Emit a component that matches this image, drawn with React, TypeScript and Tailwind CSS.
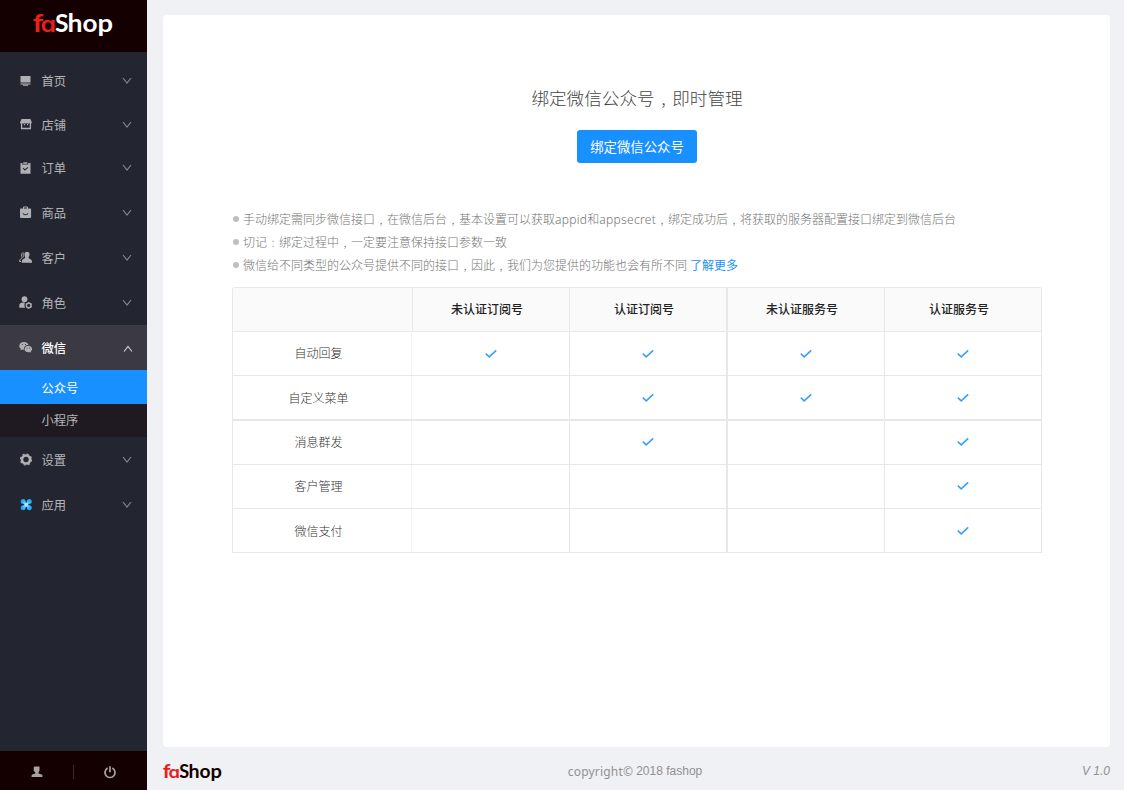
import React from "react";

const cjk = "font-['Noto_Sans_CJK_SC','Noto_Sans',sans-serif]";

const wordmark = [
  { char: "S", x: 22, width: 13.5 },
  { char: "h", x: 34.5, width: 15 },
  { char: "o", x: 49.5, width: 15 },
  { char: "p", x: 64.5, width: 15.5 },
];

function Logo({ width, height, dark }: { width: number; height: number; dark?: boolean }) {
  return (
    <svg width={width} height={height} viewBox="0 0 80 28" className="block overflow-visible">
      <g fill="#e8201d">
        <text x="-.3" y="20" textLength="10.500" lengthAdjust="spacingAndGlyphs" className="font-['Lato',sans-serif] text-[25px] font-bold">f</text>
        <text x="7.500" y="20" textLength="15.500" lengthAdjust="spacingAndGlyphs" className="font-['Inter',sans-serif] text-[22px] font-semibold [font-feature-settings:'cv11']">a</text>
      </g>
      <g fill={dark ? "#140000" : "#ffffff"} className="font-['Lato',sans-serif] text-[25px] font-bold">
        {wordmark.map(({ char, x, width: w }) => (
          <text key={char} x={x} y="20" textLength={w} lengthAdjust="spacingAndGlyphs">
            {char}
          </text>
        ))}
      </g>
    </svg>
  );
}

function Chevron({ up }: { up?: boolean }) {
  return (
    <svg width="10" height="8" viewBox="0 0 10 8" fill="none" stroke={up ? "#cfcfd2" : "#85868d"} strokeWidth="1.2" className={up ? "-mr-px mt-[2px] block" : "block"}>
      <path d={up ? "M1 6.5 5 1.5 9 6.5" : "M1 1 5 6 9 1"} />
    </svg>
  );
}

const icons: Record<string, React.ReactNode> = {
  home: (
    <>
      <path d="M1.500 1h10v6.500h-10z" />
      <path d="M1.500 8.200h10v1.600h-2.500v1.200H4v-1.200H1.500z" opacity=".75" />
    </>
  ),
  shop: (
    <>
      <path d="M2.500 1h9l1.300 3.500c0 1-1.700 1.500-2 .3-.6 1.200-2.200 1.200-2.700 0-.6 1.200-2 1.200-2.500 0-.6 1.200-2.100 1.200-2.600 0-.5 1-2 .8-2-.3z" />
      <path d="M2.600 5v5.500h8.800V5" fill="none" stroke="currentColor" strokeWidth="1.300" />
      <path d="M5 6.500h1M8 6.500h1" stroke="currentColor" strokeWidth="1.500" />
    </>
  ),
  order: (
    <>
      <path fillRule="evenodd" d="M1.500 1h1.800v1.500h6V1h2.200v10.800h-10zM3.700 6.300 5.800 8.800 9.300 5.800 8.600 5 5.900 7.300 4.500 5.700z" />
      <path d="M4.200.3h4.200v1.500H4.200z" />
    </>
  ),
  goods: (
    <>
      <path fillRule="evenodd" d="M1.700 2.400h9.600c.5 0 .8.3.8.8v7.500c0 .8-.5 1.300-1.200 1.300H2.200c-.7 0-1.200-.5-1.200-1.300V3.200c0-.5.300-.8.700-.8zM3.600 7.300c.6 2.600 5.200 2.600 5.800 0h-1c-.6 1.300-3.200 1.300-3.800 0z" />
      <path d="M4.500 3V1h4v2" fill="none" stroke="currentColor" />
    </>
  ),
  customer: (
    <>
      <path d="M5.500 3c0-3 5-3 5 .2 0 1.700-.6 2.500-1.100 3 0 1.800 3.600 1.300 3.600 4.600v.9H2.800v-.9c0-3.200 3.700-2.800 3.500-4.600-.5-.6-.8-1.600-.8-3.200z" />
      <path d="M4.800 2C2 1.500 2 4.500 3.200 6.200 3.200 7.800.5 7.500.5 10.500H2M4.500 3c-.8 1 .1 2.700.1 3.200" fill="none" stroke="currentColor" />
    </>
  ),
  role: (
    <>
      <circle cx="5.500" cy="3.200" r="2.900" />
      <path d="M.3 11.800V9.500C.4 7.500 2 6.600 3.500 6.600h2.600c-.9 1.700-.9 3.600.2 5.200z" />
      <circle cx="9.700" cy="9.400" r="2.300" fill="none" stroke="currentColor" strokeWidth="1.400" />
      <path d="M9.700 6v1M9.700 11.800v1M6.700 7.700l.8.500M11.900 10.600l.8.500M12.700 7.700l-.8.500" stroke="currentColor" strokeWidth="1.200" />
    </>
  ),
  wechat: (
    <>
      <path fillRule="evenodd" d="M5 1C2.300 1 .3 2.700.3 4.900c0 1.200.6 2.200 1.600 2.900L1.500 9.300 3.200 8.500c.6.200 1.100.2 1.700.2C4.500 6 6.500 4 9.500 4 9 2.200 7.200 1 5 1zM3.400 2.900a.6.600 0 1 1 0 1.200.6.600 0 0 1 0-1.200zm3.200 0a.6.600 0 1 1 0 1.200.6.600 0 0 1 0-1.200z" />
      <path fillRule="evenodd" d="M9.300 4.800c-2.200 0-3.800 1.400-3.800 3.200s1.600 3.200 3.800 3.200c.5 0 .9-.1 1.300-.2l1.500.7-.4-1.300c.9-.6 1.400-1.400 1.400-2.400 0-1.800-1.700-3.200-3.800-3.200zM8 6.500a.5.500 0 1 1 0 1 .5.500 0 0 1 0-1zm2.600 0a.5.500 0 1 1 0 1 .5.500 0 0 1 0-1z" />
    </>
  ),
  setting: (
    <>
      <circle cx="7" cy="6.500" r="4" fill="none" stroke="currentColor" strokeWidth="2.600" />
      <circle cx="7" cy="6.500" r="5.500" fill="none" stroke="currentColor" strokeWidth="1.200" strokeDasharray="2.160 2.160" />
    </>
  ),
  app: (
    <>
      <g fill="#22a7f2">
        <circle cx="4.200" cy="3.600" r="2.500" />
        <circle cx="10.300" cy="3.600" r="2.500" />
        <circle cx="4.200" cy="9.700" r="2.500" />
        <circle cx="10.300" cy="9.700" r="2.500" />
      </g>
      <path d="m4.200 3.600 6.100 6.100M10.300 3.600 4.200 9.700" stroke="#4fc0fb" strokeWidth="2.800" />
      <path d="M5.500 4.900h3.500v3.500H5.500z" fill="#a3e4ff" />
    </>
  ),
};

function MenuRow({ icon, label, height, active }: { icon: string; label: string; height: string; active?: boolean }) {
  return (
    <div className={`flex items-center pl-[19px] pr-[15px] ${height} ${active ? "bg-[#3b3a44] text-white" : "text-[#b5b5b7]"}`}>
      <svg width="14" height="13" viewBox="0 0 14 13" fill="currentColor" className="mr-[8.500px] shrink-0 text-[#b0b0b4]">
        {icons[icon]}
      </svg>
      <span className={`flex-1 text-[12.300px] leading-5 ${active ? "font-medium" : ""}`}>{label}</span>
      <Chevron up={active} />
    </div>
  );
}

function Copy({ text }: { text: string }) {
  return (
    <>
      {text.split(/([,:])/).map((part, i) =>
        part === "," || part === ":" ? (
          <span key={i} className="inline-block w-[1em] text-center [font-feature-settings:'halt']">
            {part}
          </span>
        ) : (
          <React.Fragment key={i}>{part}</React.Fragment>
        ),
      )}
    </>
  );
}

function Note({ children }: { children: React.ReactNode }) {
  return (
    <div className="flex h-[23px] items-center whitespace-nowrap pl-px">
      <span className="mr-1 size-[6px] shrink-0 rounded-full bg-[#bfbfbf]" />
      <span className="leading-[23px]">{children}</span>
    </div>
  );
}

function Check() {
  return (
    <svg width="12" height="10" viewBox="0 0 12 10" fill="none" stroke="#389fff" strokeWidth="1.600" className="block">
      <path d="M.8 4.700 4.200 7.800 11.200 1.400" />
    </svg>
  );
}

const headers = ["未认证订阅号", "认证订阅号", "未认证服务号", "认证服务号"];
const rows = [
  { label: "自动回复", marks: [true, true, true, true], height: "h-11 border-b", labelPad: "pb-px", markPad: "" },
  { label: "自定义菜单", marks: [false, true, true, true], height: "h-[45px] border-b-2", labelPad: "pt-px", markPad: "" },
  { label: "消息群发", marks: [false, true, false, true], height: "h-11 border-b", labelPad: "pb-px", markPad: "pb-[2px]" },
  { label: "客户管理", marks: [false, false, false, true], height: "h-11 border-b", labelPad: "pb-px", markPad: "pb-[2px]" },
  { label: "微信支付", marks: [false, false, false, true], height: "h-11 border-b", labelPad: "pt-px", markPad: "" },
];

export default function App() {
  return (
    <div className={`flex h-[790px] w-[1124px] overflow-hidden bg-[#f0f1f5] text-[12px] ${cjk}`}>
      <aside className="flex w-[147px] shrink-0 flex-col bg-[#232530]">
        <div className="flex h-[52px] shrink-0 bg-[#140000] pl-[33px] pt-3">
          <Logo width={80} height={28} />
        </div>
        <nav className="flex-1 pt-[7px]">
          <MenuRow icon="home" label="首页" height="h-11" />
          <MenuRow icon="shop" label="店铺" height="h-[43px]" />
          <MenuRow icon="order" label="订单" height="h-11" />
          <MenuRow icon="goods" label="商品" height="h-[45px]" />
          <MenuRow icon="customer" label="客户" height="h-[45px]" />
          <MenuRow icon="role" label="角色" height="h-[45px]" />
          <MenuRow icon="wechat" label="微信" height="h-[45px]" active />
          <div className="flex h-[34px] items-center bg-[#1890ff] pl-[41.500px] pt-[2px] text-[12.300px] text-white">公众号</div>
          <div className="flex h-[33px] items-center bg-[#1f1a22] pl-[41.500px] text-[12.300px] text-[#b5b5b7]">小程序</div>
          <MenuRow icon="setting" label="设置" height="h-[45px]" />
          <MenuRow icon="app" label="应用" height="h-[45px]" />
        </nav>
        <div className="flex h-[39px] shrink-0 items-center bg-[#140000] pt-[3px] text-[#a8a3a3]">
          <div className="flex w-[73px] justify-center">
            <svg width="12" height="12" viewBox="0 0 12 12" fill="currentColor">
              <path d="M3.500.5h5v4.300L7.500 6.500v1l3.800 1.300.2 2.200H.5l.2-2.200 3.600-1.300v-1L2.700 4.800V1.500z" />
            </svg>
          </div>
          <div className="h-[14px] w-px bg-[#3a2b2d]" />
          <div className="flex flex-1 justify-center pr-px">
            <svg width="12" height="13" viewBox="0 0 12 13" fill="none" stroke="currentColor" strokeWidth="1.700">
              <path d="M3.600 2.100a5 5 0 1 0 4.800 0M6 .3v6" />
            </svg>
          </div>
        </div>
      </aside>

      <div className="flex min-w-0 flex-1 flex-col pl-4 pr-[14px] pt-[15px]">
        <main className="flex h-[732px] flex-col rounded bg-white pl-[69px] pr-[68px] pt-[69px]">
          <h1 className="flex h-7 items-center justify-center whitespace-nowrap text-[17.600px] font-light text-[#444]">
            <span>
              <Copy text="绑定微信公众号,即时管理" />
            </span>
          </h1>
          <button className="mt-[18px] h-[33px] w-[120px] self-center rounded-[3px] bg-[#1890ff] text-[13.400px] text-white">绑定微信公众号</button>

          <div className="mt-[44px] font-light text-[#757575]">
            <Note>
              <Copy text="手动绑定需同步微信接口,在微信后台,基本设置可以获取" />
              <span className="font-['Noto_Sans',sans-serif] tracking-[0.300px]">appid</span>和
              <span className="font-['Noto_Sans',sans-serif] tracking-[0.300px]">appsecret</span>
              <Copy text=",绑定成功后,将获取的服务器配置接口绑定到微信后台" />
            </Note>
            <Note>
              <Copy text="切记:绑定过程中,一定要注意保持接口参数一致" />
            </Note>
            <Note>
              <Copy text="微信给不同类型的公众号提供不同的接口,因此,我们为您提供的功能也会有所不同" />
              <a className="ml-[3px] font-normal text-[#1890ff]">了解更多</a>
            </Note>
          </div>

          <div className="mt-[11px] w-[810px] overflow-hidden rounded-t-[3px] border-l border-t border-[#e8e8e8]">
            <div className="grid h-11 grid-cols-[180px_157px_158px_157px_157px] border-b border-[#e8e8e8] bg-[#fafafa] font-medium text-[#222]">
              <div className="border-r border-[#e8e8e8]" />
              {headers.map((h, i) => (
                <div key={h} className={`flex items-center justify-center border-[#e8e8e8] pb-px pr-2 ${i === 1 ? "border-r-2" : "border-r"}`}>
                  {h}
                </div>
              ))}
            </div>
            {rows.map((row) => (
              <div key={row.label} className={`grid grid-cols-[179px_158px_158px_157px_157px] border-[#e8e8e8] ${row.height}`}>
                <div className={`flex items-center justify-center border-r border-[#f2f2f2] pr-[7px] font-light text-[#333] ${row.labelPad}`}>{row.label}</div>
                {row.marks.map((mark, i) => (
                  <div key={i} className={`flex items-center justify-center border-[#e8e8e8] ${row.markPad} ${i === 1 ? "border-r-2" : "border-r"}`}>
                    {mark && <Check />}
                  </div>
                ))}
              </div>
            ))}
          </div>
        </main>

        <footer className="grid flex-1 grid-cols-3 items-center pt-1 text-[12px] text-[#909090]">
          <div className="pt-[5px]">
            <Logo width={59} height={21} dark />
          </div>
          <div className="flex items-center justify-center whitespace-nowrap pr-[3px]">
            <span className="pt-[2px] font-['Noto_Sans',sans-serif] tracking-[0.200px]">copyright©</span>
            <span className="ml-[3px] font-['Liberation_Sans',sans-serif]">2018 fashop</span>
          </div>
          <div className="text-right font-['Liberation_Sans',sans-serif] italic">V 1.0</div>
        </footer>
      </div>
    </div>
  );
}
